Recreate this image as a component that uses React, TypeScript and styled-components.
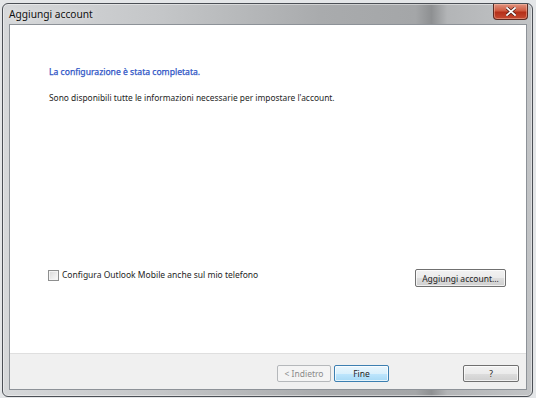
import React from 'react'
import styled, { createGlobalStyle } from 'styled-components'

const GlobalStyle = createGlobalStyle`
  *, *::before, *::after {
    box-sizing: border-box;
  }
  html, body {
    margin: 0;
    padding: 0;
    background: #e4e6e8;
  }
  body {
    font-family: 'Noto Sans', 'Open Sans', sans-serif;
    font-size: 8.5px;
    color: #1e1e1e;
  }
`

function App() {
  return (
    <>
      <GlobalStyle />
      <Window>
        <TitleBar>
          <Title>Aggiungi account</Title>
          <CloseButton aria-label="Chiudi">
            <svg width="10" height="9" viewBox="0 0 10 9">
              <path
                d="M1 1 L9 8 M9 1 L1 8"
                stroke="#4a1a14"
                strokeWidth="3.2"
                strokeLinecap="square"
              />
              <path
                d="M1 1 L9 8 M9 1 L1 8"
                stroke="#ffffff"
                strokeWidth="1.8"
                strokeLinecap="square"
              />
            </svg>
          </CloseButton>
        </TitleBar>

        <Client>
          <Content>
            <Heading>La configurazione è stata completata.</Heading>
            <Text>
              Sono disponibili tutte le informazioni necessarie per impostare
              l'account.
            </Text>

            <OptionRow>
              <CheckLabel>
                <CheckBox />
                Configura Outlook Mobile anche sul mio telefono
              </CheckLabel>
              <PushButton $width={91} $height={18}>
                Aggiungi account...
              </PushButton>
            </OptionRow>
          </Content>

          <Footer>
            <NavGroup>
              <PushButton $width={54} $variant="disabled">
                &lt; Indietro
              </PushButton>
              <PushButton $width={55} $variant="default">
                Fine
              </PushButton>
            </NavGroup>
            <PushButton $width={56}>?</PushButton>
          </Footer>
        </Client>
      </Window>
    </>
  )
}
export default App

// Inner Components

const Window = styled.div`
  display: flex;
  flex-direction: column;
  width: 531px;
  height: 394px;
  margin: 3px 0 0 2px;
  padding: 0 5px 6px 6px;
  border: 1px solid #4b4f55;
  border-radius: 6px;
  background: linear-gradient(
    90deg,
    #d6d8da 0%,
    #c4c6c8 30%,
    #a9abad 60%,
    #a4a6a8 78%,
    #8e9092 81%,
    #b3b5b7 84%,
    #c2c4c6 100%
  );
  box-shadow: inset 0 0 0 1px rgba(255 255 255 / 45%);
`

const TitleBar = styled.div`
  display: flex;
  align-items: flex-start;
  justify-content: space-between;
  height: 20px;
`

const Title = styled.span`
  margin: 3px 0 0 0;
  font-size: 10.2px;
  color: #111;
  text-shadow: 0 0 6px rgba(255 255 255 / 90%);
`

const CloseButton = styled.div`
  display: flex;
  align-items: center;
  justify-content: center;
  width: 35px;
  height: 16px;
  margin-right: -1px;
  border: 1px solid #5c2a22;
  border-top: none;
  border-radius: 0 0 4px 4px;
  background: linear-gradient(180deg, #e0937f 0%, #cf5a40 45%, #b52f18 55%, #c54a32 100%);
  box-shadow: inset 0 0 0 1px rgba(255 210 190 / 40%);
`

const Client = styled.div`
  display: flex;
  flex-direction: column;
  flex: 1;
  border: 1px solid #8d9298;
  background: #ffffff;
`

const Content = styled.div`
  display: flex;
  flex-direction: column;
  flex: 1;
  padding: 41px 20px 66px 39px;
  background: #ffffff;
`

const Heading = styled.div`
  font-size: 8.6px;
  line-height: 12px;
  font-weight: 400;
  color: #2f55c6;
  -webkit-text-stroke: 0.25px #2f55c6;
`

const Text = styled.div`
  margin-top: 14px;
  font-size: 8.4px;
  line-height: 12px;
  color: #1e1e1e;
`

const OptionRow = styled.div`
  display: flex;
  align-items: flex-start;
  justify-content: space-between;
  margin-top: auto;
  margin-left: -1px;
`

const CheckLabel = styled.label`
  display: flex;
  align-items: center;
  gap: 3px;
  font-size: 8.5px;
  line-height: 12px;
  color: #1e1e1e;
`

const CheckBox = styled.span`
  width: 11px;
  height: 11px;
  border: 1px solid #8e8f8f;
  background: linear-gradient(135deg, #d8d8d8 0%, #ececec 55%, #fbfbfb 100%);
  box-shadow: inset 0 0 0 1px #f4f4f4;
`

const Footer = styled.div`
  display: flex;
  align-items: flex-start;
  justify-content: space-between;
  height: 36px;
  padding: 11px 7px 0 267px;
  border-top: 1px solid #dfdfdf;
  background: #f0f0f0;
`

const NavGroup = styled.div`
  display: flex;
  gap: 3px;
`

const PushButton = styled.div<{
  $width: number
  $height?: number
  $variant?: 'normal' | 'default' | 'disabled'
}>`
  display: flex;
  align-items: center;
  justify-content: center;
  width: ${(p) => p.$width}px;
  height: ${(p) => p.$height ?? 17}px;
  border-radius: 2px;
  font-size: 8.5px;
  color: ${(p) => (p.$variant === 'disabled' ? '#8a8a8a' : '#1e1e1e')};
  border: 1px solid
    ${(p) =>
      p.$variant === 'default' ? '#3c7fb1' : p.$variant === 'disabled' ? '#b5b8bb' : '#707070'};
  background: ${(p) =>
    p.$variant === 'default'
      ? 'linear-gradient(180deg, #eaf6fd 0%, #d9f0fc 50%, #bee6fd 52%, #a7d9f5 100%)'
      : p.$variant === 'disabled'
        ? '#f4f4f4'
        : 'linear-gradient(180deg, #f2f2f2 0%, #ebebeb 50%, #dddddd 52%, #cfcfcf 100%)'};
  box-shadow: ${(p) =>
    p.$variant === 'disabled' ? 'none' : 'inset 0 0 0 1px rgba(255 255 255 / 70%)'};
`
